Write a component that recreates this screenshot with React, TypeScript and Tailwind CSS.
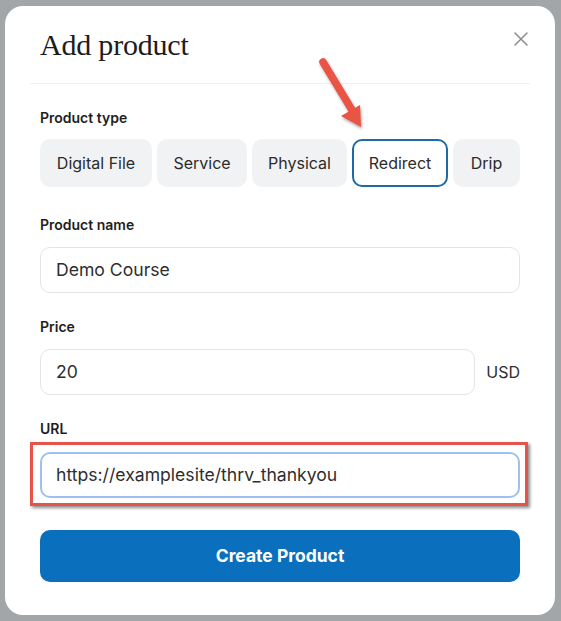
import React from "react";

const types = [
  { label: "Digital File", w: "w-[112px]" },
  { label: "Service", w: "w-[90px]" },
  { label: "Physical", w: "w-[95px]" },
  { label: "Redirect", w: "w-[96px]" },
  { label: "Drip", w: "w-[67px]" },
];

export default function App() {
  return (
    <div className="w-[561px] h-[621px] bg-[#a2a6a8] pt-[6px] pl-[5px] overflow-hidden" style={{ fontFamily: "Inter, 'Noto Sans', sans-serif" }}>
      <div className="relative w-[550px] h-[609px] bg-white rounded-[18px] px-[35px]">
        {/* Header */}
        <div className="flex items-start justify-between pt-[19px]">
          <h1 className="text-[30px] leading-[40px] text-[#1c1c1c] tracking-[-0.2px]" style={{ fontFamily: "'Liberation Serif', 'DejaVu Serif', serif" }}>
            Add product
          </h1>
          <button className="mt-[6px] mr-[-9px] text-[#8a8a8a]" aria-label="Close">
            <svg width="16" height="16" viewBox="0 0 16 16" fill="none" stroke="currentColor" strokeWidth="1.5" strokeLinecap="round">
              <path d="M2 2L14 14M14 2L2 14" />
            </svg>
          </button>
        </div>
        <div className="mx-[-10px] mt-[18px] h-px bg-[#f0f1f2]" />

        {/* Product type */}
        <div className="mt-[24px] text-[14px] leading-[20px] font-semibold text-[#1e1e1e]">Product type</div>
        <div className="mt-[11px] flex gap-[5px]">
          {types.map((t) =>
            t.label === "Redirect" ? (
              <div key={t.label} className={`${t.w} h-[48px] flex items-center justify-center rounded-[10px] border-2 border-[#1f6aa5] bg-white text-[16px] text-[#2b2b2b]`}>
                {t.label}
              </div>
            ) : (
              <div key={t.label} className={`${t.w} h-[48px] flex items-center justify-center rounded-[10px] bg-[#f0f2f4] text-[16px] text-[#2b2b2b]`}>
                {t.label}
              </div>
            )
          )}
        </div>

        {/* Product name */}
        <div className="mt-[28px] text-[14px] leading-[20px] font-semibold text-[#1e1e1e]">Product name</div>
        <div className="mt-[12px] h-[46px] rounded-[10px] border border-[#e3e4e5] flex items-center px-[15px] text-[17.6px] text-[#2e2e2e]">
          Demo Course
        </div>

        {/* Price */}
        <div className="mt-[24px] text-[14px] leading-[20px] font-semibold text-[#1e1e1e]">Price</div>
        <div className="mt-[12px] flex items-center gap-[11px]">
          <div className="flex-1 h-[46px] rounded-[10px] border border-[#e3e4e5] flex items-center px-[15px] text-[17.6px] text-[#2e2e2e]">
            20
          </div>
          <span className="text-[16px] text-[#2e2e2e]">USD</span>
        </div>

        {/* URL */}
        <div className="mt-[24px] text-[14px] leading-[20px] font-semibold text-[#1e1e1e]">URL</div>
        <div className="relative mt-[13px]">
          <div className="h-[46px] rounded-[10px] border-2 border-[#9dc0ee] flex items-center px-[14px] text-[17.6px] text-[#2e2e2e]">
            https://examplesite/thrv_thankyou
          </div>
          <div className="absolute left-[-10px] right-[-8px] top-[-10px] bottom-[-8px] border-[3px] border-[#e5534a] shadow-[2px_2px_3px_rgba(0,0,0,0.45)]" />
        </div>

        {/* Create button */}
        <button className="mt-[32px] w-full h-[52px] rounded-[10px] bg-[#0a6fbd] text-white text-[17.5px] font-bold">
          Create Product
        </button>

        {/* Arrow annotation */}
        <svg className="absolute left-[300px] top-[46px]" width="70" height="85" viewBox="0 0 70 85" style={{ filter: "drop-shadow(1.5px 2px 1.5px rgba(0,0,0,0.35))" }}>
          <line x1="18" y1="10" x2="47" y2="58" stroke="#ea5444" strokeWidth="7.5" strokeLinecap="round" />
          <polygon points="36,64 55,53 56,75" fill="#ea5444" />
        </svg>
      </div>
    </div>
  );
}
